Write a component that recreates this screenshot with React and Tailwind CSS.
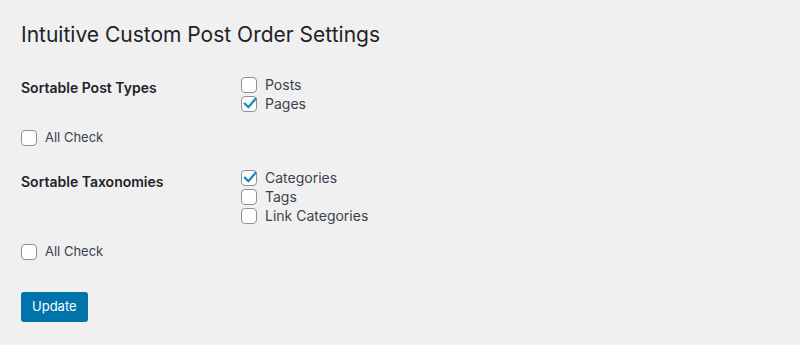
import { useState } from "react";

const font = { fontFamily: "Inter, 'Noto Sans', sans-serif" };

function Box({ checked, onChange }) {
  return (
    <span
      onClick={onChange}
      className="relative flex h-4 w-4 shrink-0 items-center justify-center rounded-[4px] border border-[#8c8f94] bg-white"
    >
      {checked && (
        <svg viewBox="0 0 16 16" className="absolute -left-px -top-px h-4 w-4 overflow-visible">
          <path
            d="M3.8 7.6 L7.4 11.2 L14.6 2.8"
            fill="none"
            stroke="#1e8cbe"
            strokeWidth="2.3"
            strokeLinecap="round"
            strokeLinejoin="round"
          />
        </svg>
      )}
    </span>
  );
}

function Option({ label, checked, onToggle, className = "", size = "text-[14px]" }) {
  return (
    <label className={`flex h-[19px] cursor-pointer items-center gap-2 ${className}`}>
      <Box checked={checked} onChange={onToggle} />
      <span className={`${size} text-[#3c434a]`}>{label}</span>
    </label>
  );
}

export default function App() {
  const [postTypes, setPostTypes] = useState({ Posts: false, Pages: true });
  const [taxonomies, setTaxonomies] = useState({
    Categories: true,
    Tags: false,
    "Link Categories": false,
  });
  const [allPosts, setAllPosts] = useState(false);
  const [allTax, setAllTax] = useState(false);

  return (
    <div className="min-h-screen bg-[#f0f0f1] pl-[21px] pt-[20px] text-[#1d2327]" style={font}>
      <h1 className="text-[21px] leading-[29px] font-normal">
        Intuitive Custom Post Order Settings
      </h1>

      {/* post types */}
      <div className="mt-[26px] flex">
        <div className="w-[220px] pt-[3px] text-[14px] leading-[19px] font-semibold">
          Sortable Post Types
        </div>
        <div>
          {Object.keys(postTypes).map((k) => (
            <Option
              key={k}
              label={k}
              checked={postTypes[k]}
              onToggle={() => setPostTypes({ ...postTypes, [k]: !postTypes[k] })}
            />
          ))}
        </div>
      </div>
      <Option
        className="mt-[15px]"
        size="text-[13px]"
        label="All Check"
        checked={allPosts}
        onToggle={() => setAllPosts(!allPosts)}
      />

      {/* taxonomies */}
      <div className="mt-[21px] flex">
        <div className="w-[220px] pt-[4px] text-[14px] leading-[19px] font-semibold">
          Sortable Taxonomies
        </div>
        <div>
          {Object.keys(taxonomies).map((k) => (
            <Option
              key={k}
              label={k}
              checked={taxonomies[k]}
              onToggle={() => setTaxonomies({ ...taxonomies, [k]: !taxonomies[k] })}
            />
          ))}
        </div>
      </div>
      <Option
        className="mt-[17px]"
        size="text-[13px]"
        label="All Check"
        checked={allTax}
        onToggle={() => setAllTax(!allTax)}
      />

      <button className="mt-[31px] h-[30px] rounded-[3px] bg-[#0073aa] px-[11px] text-[13px] text-white">
        Update
      </button>
    </div>
  );
}
